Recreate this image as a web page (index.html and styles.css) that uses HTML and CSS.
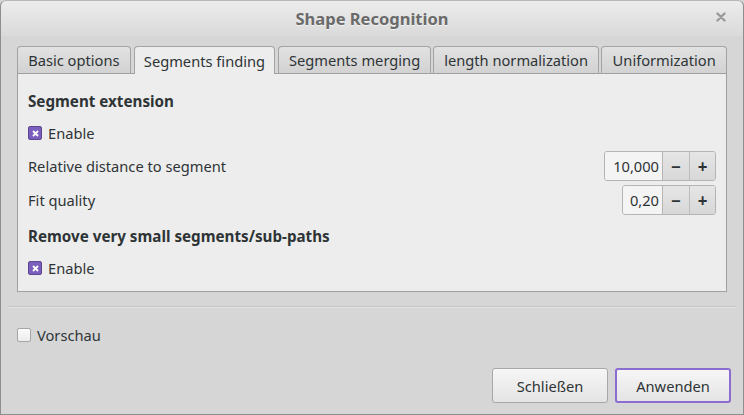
FILE: index.html
```html
<!DOCTYPE html>
<html>
<head>
<meta charset="utf-8">
<link rel="stylesheet" href="styles.css">
</head>
<body>
<div class="window">
  <div class="titlebar">
    <span class="title">Shape Recognition</span>
    <span class="close">
      <svg width="10" height="10" viewBox="0 0 10 10"><path d="M1.5 1.5 L8.5 8.5 M8.5 1.5 L1.5 8.5" stroke="#9a9a9a" stroke-width="2.4" stroke-linecap="round"/></svg>
    </span>
  </div>
  <div class="content">
    <div class="notebook">
      <div class="tabs">
        <div class="tab t1">Basic options</div>
        <div class="tab t2 active">Segments finding</div>
        <div class="tab t3">Segments merging</div>
        <div class="tab t4">length normalization</div>
        <div class="tab t5">Uniformization</div>
      </div>
      <div class="panel">
        <div class="row heading h1">Segment extension</div>
        <label class="row check r-en1"><span class="cb checked"><svg width="7" height="7" viewBox="0 0 7 7"><path d="M1 1 L6 6 M6 1 L1 6" stroke="#fff" stroke-width="1.8"/></svg></span>Enable</label>
        <div class="row field r-dist">
          <span class="label">Relative distance to segment</span>
          <div class="spin"><span class="entry w1">10,000</span><span class="sbtn">−</span><span class="sbtn">+</span></div>
        </div>
        <div class="row field r-fit">
          <span class="label">Fit quality</span>
          <div class="spin"><span class="entry w2">0,20</span><span class="sbtn">−</span><span class="sbtn">+</span></div>
        </div>
        <div class="row heading h2">Remove very small segments/sub-paths</div>
        <label class="row check r-en2"><span class="cb checked"><svg width="7" height="7" viewBox="0 0 7 7"><path d="M1 1 L6 6 M6 1 L1 6" stroke="#fff" stroke-width="1.8"/></svg></span>Enable</label>
      </div>
    </div>
  </div>
  <div class="separator"></div>
  <label class="preview"><span class="cb"></span>Vorschau</label>
  <div class="actions">
    <button class="btn">Schließen</button>
    <button class="btn default">Anwenden</button>
  </div>
</div>
</body>
</html>
```
FILE: styles.css
```css
* { box-sizing: border-box; }
html, body { margin: 0; padding: 0; }
body {
  width: 744px;
  height: 415px;
  overflow: hidden;
  font-family: "Noto Sans", "Open Sans", sans-serif;
  font-size: 14.67px;
  color: #2e3436;
  background: #d6d6d6;
}
.window {
  width: 744px;
  height: 415px;
  border: 1px solid #8e8e8e;
  border-top-color: #b8b8b8;
  border-radius: 6px 6px 0 0;
  background: #d6d6d6;
  display: flex;
  flex-direction: column;
}
.titlebar {
  height: 35px;
  flex: none;
  display: flex;
  align-items: center;
  justify-content: center;
  position: relative;
  background: linear-gradient(#ececec, #dadada);
  border-radius: 6px 6px 0 0;
}
.title {
  font-weight: bold;
  font-size: 16.5px;
  color: #6a6a6a;
  text-shadow: 0 1px 0 rgba(255,255,255,0.6);
  margin-top: 0;
}
.close {
  position: absolute;
  right: 17px;
  top: 11px;
  width: 10px;
  height: 10px;
  display: flex;
}
.content {
  padding: 10px 16px 0 16px;
}
.notebook { display: flex; flex-direction: column; }
.tabs {
  display: flex;
  height: 27px;
  align-items: flex-end;
  gap: 3px;
  position: relative;
  z-index: 1;
}
.tab {
  height: 27px;
  border: 1px solid #a3a3a3;
  border-bottom: none;
  border-radius: 4px 4px 0 0;
  background: linear-gradient(#e2e2e2, #d2d2d2);
  display: flex;
  align-items: center;
  justify-content: center;
  color: #2e3436;
  white-space: nowrap;
}
.tab.active {
  background: #ededed;
  height: 28px;
  margin-bottom: -1px;
}
.t1 { width: 114px; }
.t2 { width: 142px; }
.t3 { width: 153px; }
.t4 { width: 167px; margin-left: -1px; }
.t5 { width: 126px; margin-left: -1px; }
.panel {
  width: 710px;
  height: 219px;
  border: 1px solid #a0a0a0;
  background: #ededed;
  padding: 15px 10px 0 10px;
  display: flex;
  flex-direction: column;
}
.row { display: flex; align-items: center; }
.heading { height: 24px; font-weight: bold; font-size: 15.2px; }
.check { height: 24px; }
.field { height: 30px; justify-content: space-between; }
.r-en1 { margin-top: 8px; }
.r-dist { margin-top: 6px; }
.r-fit { margin-top: 4px; }
.h2 { margin-top: 9px; }
.r-en2 { margin-top: 8px; }
.cb {
  width: 14px;
  height: 14px;
  border: 1px solid #a6a6a6;
  border-radius: 2px;
  background: linear-gradient(#fbfbfb, #ececec);
  margin-right: 6px;
  display: inline-flex;
  align-items: center;
  justify-content: center;
  flex: none;
}
.cb.checked {
  background: #7b5fbc;
  border-color: #5d4790;
}
.spin {
  display: flex;
  height: 30px;
  border: 1px solid #b4b4b4;
  border-radius: 3px;
  overflow: hidden;
}
.entry {
  background: #f4f4f4;
  display: flex;
  align-items: center;
  justify-content: flex-end;
  padding-right: 3px;
  border-right: 1px solid #b4b4b4;
}
.w1 { width: 58px; }
.w2 { width: 40px; }
.sbtn {
  width: 26px;
  display: flex;
  align-items: center;
  justify-content: center;
  background: linear-gradient(#e6e6e6, #d8d8d8);
  font-weight: bold;
  font-size: 17px;
  color: #2e3436;
}
.sbtn + .sbtn { border-left: 1px solid #bdbdbd; }
.separator {
  height: 2px;
  margin: 14px 7px 0 7px;
  border-top: 1px solid #c6c6c6;
  border-bottom: 1px solid #e2e2e2;
}
.preview {
  display: flex;
  align-items: center;
  margin: 17px 0 0 16px;
  height: 20px;
}
.actions {
  display: flex;
  justify-content: flex-end;
  gap: 7px;
  margin: 23px 12px 0 0;
}
.btn {
  font-family: inherit;
  font-size: 14.67px;
  color: #2e3436;
  width: 116px;
  height: 35px;
  border: 1px solid #a8a8a8;
  border-radius: 3px;
  background: linear-gradient(#f6f6f6, #e4e4e4);
  padding: 0;
}
.btn.default {
  border: 2px solid #8b6cd1;
}
```
